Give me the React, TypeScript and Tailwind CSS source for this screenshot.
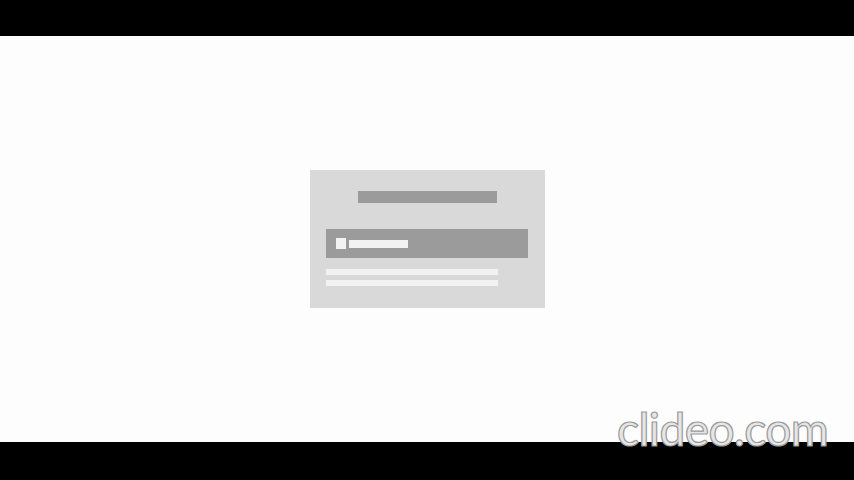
export default function App() {
  return (
    <div className="relative flex h-[480px] w-[854px] flex-col bg-black">
      <div className="h-[36px] bg-black" />
      <div className="flex h-[406px] items-center justify-center bg-[#fdfdfd]">
        <div className="flex h-[138px] w-[235px] flex-col bg-[#d9d9d9] px-[16px] pt-[21px]">
          <div className="mx-auto h-[12px] w-[139px] bg-[#9b9b9b]" />
          <div className="mt-[26px] flex h-[29px] w-[202px] items-center bg-[#9b9b9b] pl-[10px]">
            <div className="h-[11px] w-[10px] bg-[#f2f2f2]" />
            <div className="ml-[3px] h-[8px] w-[59px] bg-[#f2f2f2]" />
          </div>
          <div className="mt-[11px] h-[6px] w-[172px] bg-[#f2f2f2]" />
          <div className="mt-[5px] h-[6px] w-[172px] bg-[#f2f2f2]" />
        </div>
      </div>
      <div className="h-[38px] bg-black" />
      <div
        className="absolute left-[617px] top-[406px] text-[46px] font-medium leading-none tracking-[-0.6px] text-[#e6e6e6] [-webkit-text-stroke:1.2px_#9a9a9a]"
        style={{ fontFamily: 'Lato, sans-serif' }}
      >
        clideo.com
      </div>
    </div>
  );
}
